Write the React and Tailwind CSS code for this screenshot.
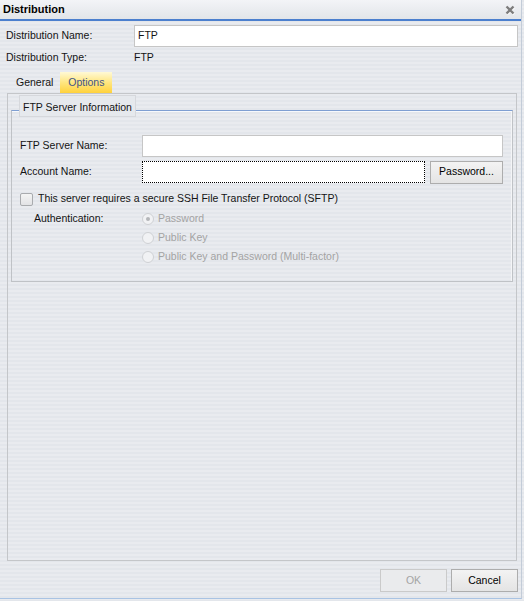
import React from "react";

const stripes =
  "bg-[repeating-linear-gradient(180deg,#e3e6eb_0px,#e3e6eb_2px,#e9ebef_2px,#e9ebef_4px)]";

function CloseIcon() {
  return (
    <svg width="10" height="10" viewBox="0 0 10 10">
      <path d="M1.5 1.5 L8.5 8.5 M8.5 1.5 L1.5 8.5" stroke="#fbfbfb" strokeWidth="2.4" transform="translate(0.5 0.8)" />
      <path d="M1.5 1.5 L8.5 8.5 M8.5 1.5 L1.5 8.5" stroke="#7d7d7d" strokeWidth="2.3" />
    </svg>
  );
}

function TextBox({ className = "", focused = false, value = "" }) {
  return (
    <div
      className={
        "h-[22px] bg-white flex items-center px-[3px] " +
        (focused ? "border border-dotted border-black " : "border border-[#c6c6c6] ") +
        className
      }
    >
      {value}
    </div>
  );
}

function Radio({ checked, label }) {
  return (
    <div className="h-[19px] flex items-center gap-[4px] text-[#a3a3a3]">
      <span className="w-[12px] h-[12px] rounded-full border border-[#cfd1d4] bg-[#f1f2f4] flex items-center justify-center">
        {checked && <span className="w-[4px] h-[4px] rounded-full bg-[#b4b6b9]" />}
      </span>
      <span>{label}</span>
    </div>
  );
}

function Button({ children, disabled, className = "" }) {
  return (
    <div
      className={
        "h-[23px] w-[67px] flex items-center justify-center border " +
        (disabled
          ? "border-[#cacaca] bg-[#eaebed] text-[#a4a4a4] "
          : "border-[#adadad] bg-[linear-gradient(180deg,#f3f3f3,#e4e4e4)] text-black ") +
        className
      }
    >
      {children}
    </div>
  );
}

export default function App() {
  return (
    <div
      className={
        "w-[524px] h-[601px] overflow-hidden text-[10.5px] text-[#141414] font-['Liberation_Sans',Arial,sans-serif] " +
        stripes
      }
    >
      <div className="w-[522px] h-[599px] flex flex-col border-r border-b border-r-[#c3ccd8] border-b-[#a9c3e3]">
        {/* title bar */}
        <div className="h-[19px] flex items-center justify-between pl-[3px] pr-[6px] bg-[linear-gradient(180deg,#f3f4f7,#e2e5e9)]">
          <span className="text-[11px] font-bold text-black">Distribution</span>
          <CloseIcon />
        </div>
        <div className="h-[2px] bg-[#4b7fce]" />

        {/* header fields */}
        <div className="mt-[4px] h-[22px] flex items-center pl-[6px] pr-[3px]">
          <span className="w-[128px]">Distribution Name:</span>
          <TextBox className="flex-1" value="FTP" />
        </div>
        <div className="h-[22px] flex items-center pl-[6px]">
          <span className="w-[128px]">Distribution Type:</span>
          <span>FTP</span>
        </div>

        {/* tabs */}
        <div className="mt-[3px] h-[21px] flex items-stretch pl-[16px]">
          <span className="flex items-center mr-[7px]">General</span>
          <span className="w-[52px] flex items-center justify-center text-[#3e5488] bg-[linear-gradient(180deg,#fff9d6_0%,#ffe680_50%,#ffd23c_100%)]">
            Options
          </span>
        </div>

        {/* tab page */}
        <div className="flex-1 ml-[7px] w-[510px] border border-[#c4c6c9] flex flex-col">
          <div className="relative mt-[16px] ml-[3px] w-[502px] border border-[#bfc2c6] border-t-[#7f9fd2] shadow-[inset_0_1px_0_#f7f9fc,inset_-1px_0_0_#f4f5f7] pt-[24px] pb-[15px] pl-[8px] pr-[8px]">
            <div className="absolute left-[7px] top-[-16px] h-[22px] flex items-center pt-[3px] px-[3px] border border-[#d6d8dc] bg-[#e6e9ed]">
              FTP Server Information
            </div>

            <div className="h-[22px] flex items-center">
              <span className="w-[122px]">FTP Server Name:</span>
              <TextBox className="w-[361px]" />
            </div>
            <div className="mt-[4px] h-[22px] flex items-center">
              <span className="w-[122px]">Account Name:</span>
              <TextBox className="w-[283px]" focused />
              <Button className="ml-[5px] w-[73px] h-[22px]">Password...</Button>
            </div>

            <div className="mt-[6px] h-[20px] flex items-center gap-[5px]">
              <span className="w-[13px] h-[13px] rounded-[2px] border border-[#a9abae] bg-[linear-gradient(180deg,#f4f4f4,#e2e3e5)]" />
              <span>This server requires a secure SSH File Transfer Protocol (SFTP)</span>
            </div>

            <div className="flex">
              <span className="w-[122px] pl-[14px] h-[19px] flex items-center">Authentication:</span>
              <div className="flex flex-col">
                <Radio checked label="Password" />
                <Radio label="Public Key" />
                <Radio label="Public Key and Password (Multi-factor)" />
              </div>
            </div>
          </div>
        </div>

        {/* dialog buttons */}
        <div className="mt-[8px] mb-[6px] flex justify-end gap-[4px] pr-[3px]">
          <Button disabled>OK</Button>
          <Button>Cancel</Button>
        </div>
      </div>
    </div>
  );
}
